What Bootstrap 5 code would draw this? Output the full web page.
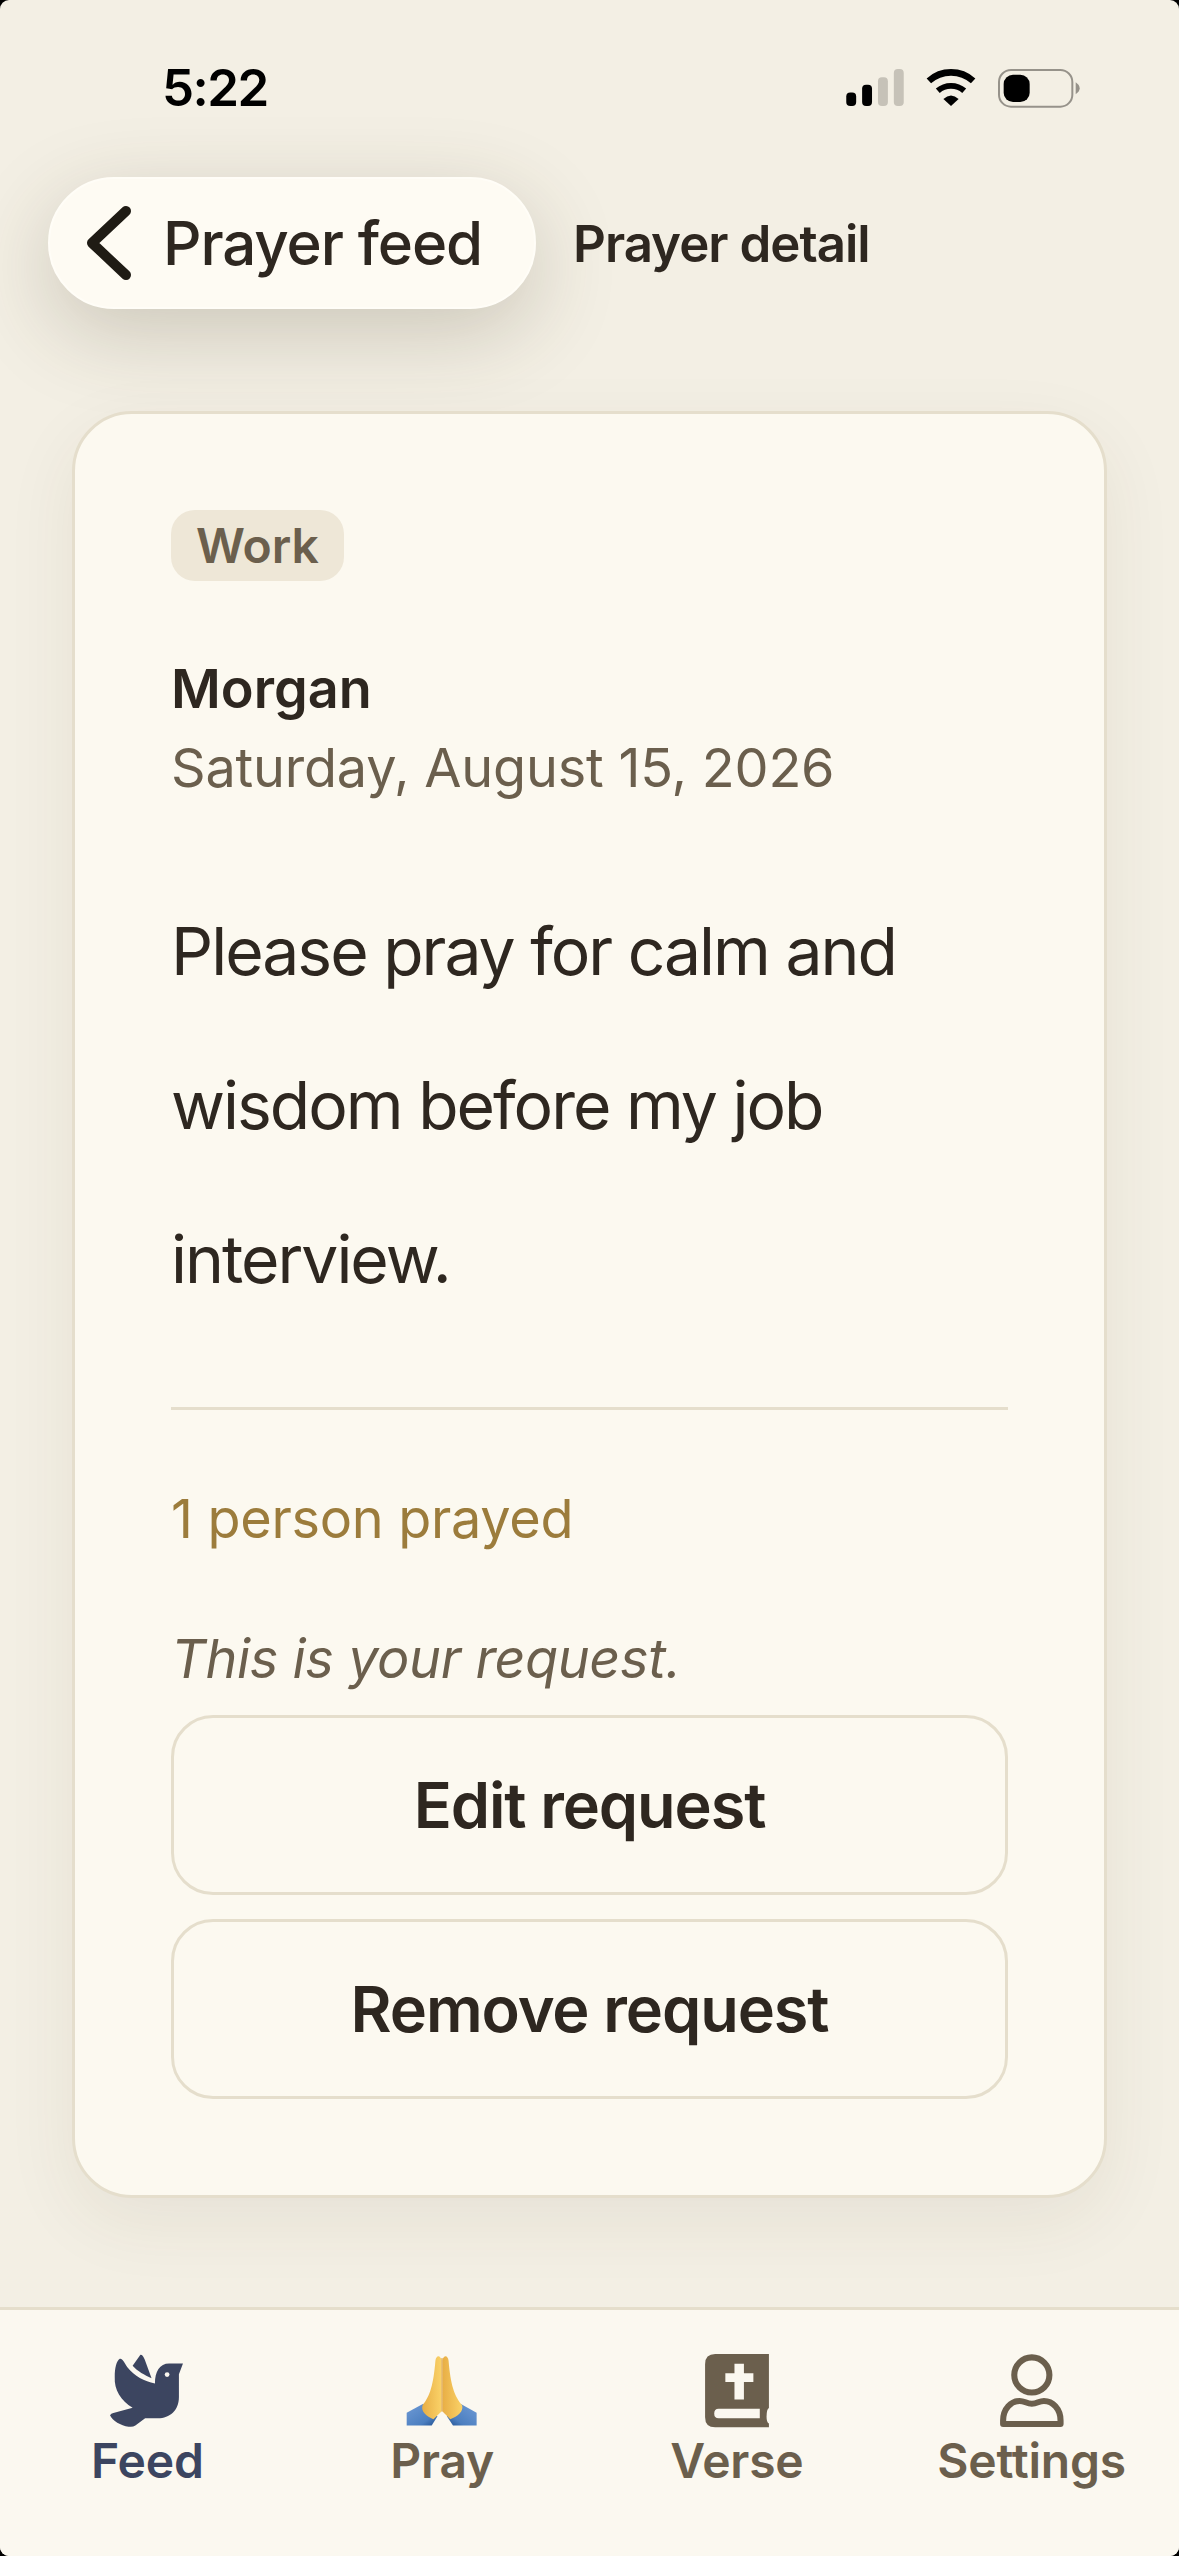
<!doctype html>
<html lang="en">
<head>
<meta charset="utf-8">
<title>Prayer detail</title>
<link href="https://cdn.jsdelivr.net/npm/bootstrap@5.3.0/dist/css/bootstrap.min.css" rel="stylesheet">
<style>
html,body{height:100%;background:#000;}
body{margin:0;font-family:Inter,"Noto Sans",sans-serif;color:#2E2720;}
.screen{height:2556px;background:#F3EFE4;border-radius:9px;overflow:hidden;}
.statusbar{height:177px;padding:0 99px 0 162px;}
.status-time{font-size:51px;font-weight:600;line-height:1;letter-spacing:-1.5px;color:#000;margin-top:62px;}
.status-icons{gap:22px;margin-top:69px;height:37px;}
.topbar{height:132px;padding-left:48px;gap:37px;}
.back-pill.btn{display:flex;align-items:center;height:132px;width:488px;padding:0 0 0 36px;gap:31px;border-radius:66px;border:2px solid #FFFDF7;background:#FEFBF3;color:#2E2720;font-size:60px;font-weight:500;letter-spacing:-1.1px;box-shadow:0 24px 84px rgba(70,58,35,.22);}
.page-title{font-size:51px;font-weight:600;letter-spacing:-1px;margin:2px 0 0;color:#2E2720;}
.content{padding:102px 72px 0 72px;}
.detail-card.card{background:#FCF9F0;border:3px solid #E5DECC;border-radius:60px;box-shadow:0 24px 72px rgba(70,58,35,.07);}
.detail-card .card-body{padding:96px;}
.cat-pill.badge{display:inline-block;background:#EEE7D7;color:#6B5F4D;font-size:48px;font-weight:600;line-height:71px;height:71px;padding:0 25px;border-radius:24px;}
.author{font-size:54px;font-weight:600;line-height:70px;margin-top:73px;}
.date{font-size:54px;line-height:81px;letter-spacing:-.2px;color:#6B5F4D;margin-top:3px;}
.message{font-size:66px;line-height:154px;letter-spacing:-2px;margin:66px 0 0;}
.rule{border:0;border-top:3px solid #E5DECC;opacity:1;margin:71px 0 0;}
.count{font-size:54px;line-height:81px;letter-spacing:-.3px;color:#9C7C3C;margin-top:68px;}
.own-note{font-size:54px;line-height:81px;letter-spacing:-.4px;font-style:italic;color:#6B5F4D;margin-top:59px;}
.stack{gap:24px;margin-top:16px;}
.act.btn{height:180px;width:100%;background:transparent;border:3px solid #E5DECC;border-radius:42px;color:#2E2720;font-size:63px;font-weight:600;letter-spacing:-1.1px;}
.tabbar{height:249px;background:#FBF8F0;border-top:3px solid #E5DECC;}
.tab.nav-link{flex:1 1 0;padding:43px 0 0;color:#6B5F4D;font-size:48px;font-weight:600;line-height:58px;letter-spacing:-.2px;text-align:center;}
.tab.nav-link.active{color:#3C4560;}
.tab-ico{display:block;width:76px;height:76px;margin:0 auto 3px;}
</style>
</head>
<body>
<div class="screen d-flex flex-column">
  <div class="statusbar d-flex justify-content-between align-items-start">
    <div class="status-time">5:22</div>
    <div class="status-icons d-flex align-items-start">
      <svg width="58" height="37" viewBox="78 56 174 112"><rect x="78" y="127" width="30" height="41" rx="12" fill="#000"/><rect x="126" y="104" width="30" height="64" rx="12" fill="#000"/><rect x="174" y="81" width="30" height="87" rx="12" fill="#C6C2B8"/><rect x="222" y="56" width="30" height="112" rx="12" fill="#C6C2B8"/></svg>
      <svg width="50" height="37" viewBox="320 56 150 112"><path d="M328 92A100 100 0 0 1 462 92" fill="none" stroke="#000" stroke-width="20"/><path d="M355 122A61 61 0 0 1 435 122" fill="none" stroke="#000" stroke-width="18"/><path d="M372 147Q395 125 418 147L395 168Z" fill="#000"/></svg>
      <svg width="82" height="39" viewBox="538 54 246 117"><rect x="541" y="57" width="220" height="110" rx="36" fill="none" stroke="#96928A" stroke-width="6"/><rect x="555" y="71" width="78" height="82" rx="28" fill="#000"/><path d="M771 94Q783 102 783 112Q783 122 771 130Z" fill="#96928A"/></svg>
    </div>
  </div>

  <div class="topbar d-flex align-items-center">
    <a class="back-pill btn" href="#">
      <svg width="46" height="74" viewBox="0 0 46 74"><path d="M40 5L6 37L40 69" fill="none" stroke="#1F1B14" stroke-width="10" stroke-linecap="round" stroke-linejoin="round"/></svg>
      <span>Prayer feed</span>
    </a>
    <h1 class="page-title">Prayer detail</h1>
  </div>

  <main class="content flex-grow-1">
    <div class="detail-card card">
      <div class="card-body">
        <span class="cat-pill badge">Work</span>
        <div class="author">Morgan</div>
        <div class="date">Saturday, August 15, 2026</div>
        <p class="message">Please pray for calm and wisdom before my job interview.</p>
        <hr class="rule">
        <div class="count">1 person prayed</div>
        <div class="own-note">This is your request.</div>
        <div class="stack d-flex flex-column">
          <button class="act btn" type="button">Edit request</button>
          <button class="act btn" type="button">Remove request</button>
        </div>
      </div>
    </div>
  </main>

  <nav class="tabbar nav d-flex flex-nowrap">
    <a class="tab nav-link active" href="#">
      <svg class="tab-ico" viewBox="90 95 225 225" fill="#3C4560"><path d="M93 279Q96 275 103 273L160 257C125 235 105 205 107 165C107 140 112 118 122 112C130 110 134 122 145 138C165 163 195 180 226 185C226 150 240 126 268 126L309 126L297 158L297 225C297 265 270 288 235 288L197 288L168 310Q160 315 148 313C125 310 100 295 93 279Z"/><path d="M183 100C190 100 192 106 196 115L216 170C195 160 175 150 160 133Z"/><circle cx="262" cy="159" r="7" fill="#FBF8F0"/></svg>
      Feed
    </a>
    <a class="tab nav-link" href="#">
      <svg class="tab-ico" viewBox="973 95 225 225">
        <defs>
          <linearGradient id="sl" x1="0" y1="0" x2="1" y2="1"><stop offset="0" stop-color="#6F9BD6"/><stop offset=".7" stop-color="#4C7FC0"/><stop offset="1" stop-color="#1F4E8F"/></linearGradient>
          <linearGradient id="sr" x1="1" y1="0" x2="0" y2="1"><stop offset="0" stop-color="#6F9BD6"/><stop offset=".7" stop-color="#4C7FC0"/><stop offset="1" stop-color="#1F4E8F"/></linearGradient>
          <linearGradient id="hd" x1="0" y1="0" x2="1" y2="0"><stop offset="0" stop-color="#E8AE45"/><stop offset="1" stop-color="#FAD268"/></linearGradient>
        </defs>
        <path d="M981 272L1030 245L1072 282L1055 310H981Z" fill="url(#sl)"/>
        <path d="M1188 272L1140 245L1100 282L1118 310H1188Z" fill="url(#sr)"/>
        <path d="M1084 116C1080 100 1068 102 1066 118C1060 190 1050 222 1028 250C1022 268 1040 284 1060 291L1084 268Z" fill="url(#hd)"/>
        <path d="M1087 116C1091 100 1103 102 1105 118C1111 190 1122 222 1145 250C1150 268 1132 284 1110 291L1087 268Z" fill="url(#hd)"/>
        <path d="M1085.500 110V268" stroke="#D99A35" stroke-width="3"/>
      </svg>
      Pray
    </a>
    <a class="tab nav-link" href="#">
      <svg class="tab-ico" viewBox="150 95 225 225"><path fill="#6B5F4D" fill-rule="evenodd" d="M198 98H357V258Q350 262 350 284Q350 302 357 304V315H198Q168 315 168 285V128Q168 98 198 98ZM255 127V155H228V181H255V233H283V181H311V155H283V127ZM330 260H208Q195 260 195 274Q195 288 208 288H330Z"/></svg>
      Verse
    </a>
    <a class="tab nav-link" href="#">
      <svg class="tab-ico" viewBox="1032 95 225 225" fill="none" stroke="#6B5F4D" stroke-width="18" stroke-linejoin="round"><circle cx="1144" cy="160" r="52"/><path d="M1059 305H1229V295C1229 260 1205 237 1180 237C1165 237 1160 245 1144 245C1128 245 1123 237 1108 237C1083 237 1059 260 1059 295Z"/></svg>
      Settings
    </a>
  </nav>
</div>
<script src="https://cdn.jsdelivr.net/npm/bootstrap@5.3.0/dist/js/bootstrap.bundle.min.js"></script>
</body>
</html>
